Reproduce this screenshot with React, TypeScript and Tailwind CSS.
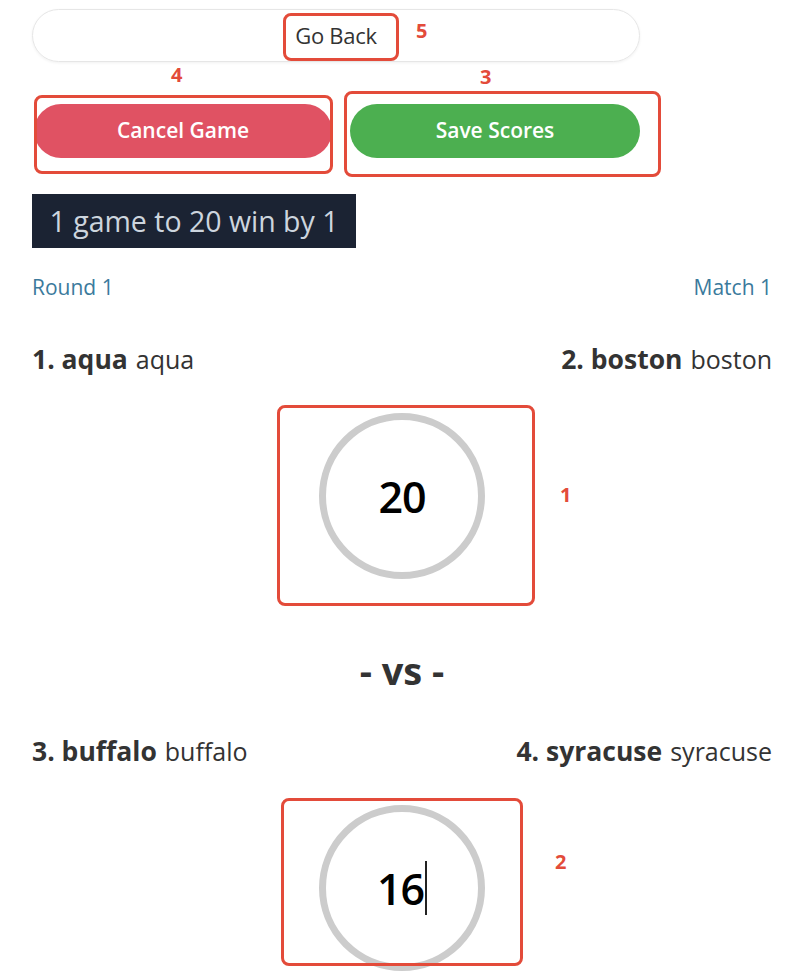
import React from "react";

const font = { fontFamily: '"Open Sans", "Noto Sans", sans-serif' };

function Ann({ cls }: { cls: string }) {
  return <div className={`absolute border-[3px] border-[#e34b3a] rounded-[8px] pointer-events-none ${cls}`} />;
}

function Num({ n, cls }: { n: string; cls: string }) {
  return (
    <div className={`absolute text-[20px] font-bold text-[#e34b3a] leading-none ${cls}`}>{n}</div>
  );
}

function ScoreCircle({ value, cursor }: { value: string; cursor?: boolean }) {
  return (
    <div className="flex justify-center">
      <div className="w-[166px] h-[166px] rounded-full border-[7px] border-[#cccccc] flex items-center justify-center">
        <span className="text-[43px] font-semibold text-black leading-none flex items-center tracking-[-1px]">
          {value}
          {cursor && <span className="inline-block w-[2px] h-[54px] bg-[#222] ml-[1px]" />}
        </span>
      </div>
    </div>
  );
}

function Team({ rank, name }: { rank: string; name: string }) {
  return (
    <span className="whitespace-nowrap">
      <span className="text-[26.5px] font-bold">{rank}. {name}</span>
      <span className="text-[25px] ml-[8px]">{name}</span>
    </span>
  );
}

export default function App() {
  return (
    <div className="relative w-[800px] h-[977px] bg-white overflow-hidden" style={font}>
      <div className="pl-[32px] pr-[28px] pt-[9px]">
        <div className="w-[608px]">
          <div className="h-[53px] rounded-full border border-[#e6e6e6] shadow-[0_1px_3px_rgba(0,0,0,0.06)] flex items-center justify-center">
            <span className="text-[22px] text-[#333] tracking-[-0.3px]">Go Back</span>
          </div>
          <div className="flex gap-[18px] mt-[42px] pl-[2px]">
            <div className="w-[298px] h-[54px] rounded-full bg-[#e05263] flex items-center justify-center text-white text-[21px] font-semibold">
              Cancel Game
            </div>
            <div className="w-[290px] h-[54px] rounded-full bg-[#4caf50] flex items-center justify-center text-white text-[21px] font-semibold">
              Save Scores
            </div>
          </div>
        </div>
        <div className="mt-[36px] w-[324px] h-[54px] bg-[#1b2333] flex items-center justify-center text-[28.5px] text-[#cdd5de]">
          1 game to 20 win by 1
        </div>
        <div className="flex justify-between items-center h-[30px] mt-[25px] text-[21px] text-[#3b7a9c] font-medium">
          <span>Round 1</span>
          <span>Match 1</span>
        </div>
        <div className="flex justify-between items-center h-[40px] mt-[37px] text-[#333]">
          <Team rank="1" name="aqua" />
          <Team rank="2" name="boston" />
        </div>
        <div className="mt-[33px]">
          <ScoreCircle value="20" />
        </div>
        <div className="flex items-center justify-center h-[40px] mt-[71px] text-[38px] font-bold text-[#333] leading-none">- vs -</div>
        <div className="flex justify-between items-center h-[40px] mt-[42px] text-[#333]">
          <Team rank="3" name="buffalo" />
          <Team rank="4" name="syracuse" />
        </div>
        <div className="mt-[33px]">
          <ScoreCircle value="16" cursor />
        </div>
      </div>

      <Ann cls="left-[283px] top-[13px] w-[116px] h-[48px]" />
      <Num n="5" cls="left-[416px] top-[21px]" />
      <Num n="4" cls="left-[171px] top-[65px]" />
      <Num n="3" cls="left-[480px] top-[67px]" />
      <Ann cls="left-[34px] top-[95px] w-[299px] h-[79px]" />
      <Ann cls="left-[344px] top-[91px] w-[317px] h-[86px]" />
      <Ann cls="left-[277px] top-[405px] w-[258px] h-[201px]" />
      <Num n="1" cls="left-[560px] top-[485px]" />
      <Ann cls="left-[281px] top-[798px] w-[242px] h-[168px]" />
      <Num n="2" cls="left-[555px] top-[852px]" />
    </div>
  );
}
